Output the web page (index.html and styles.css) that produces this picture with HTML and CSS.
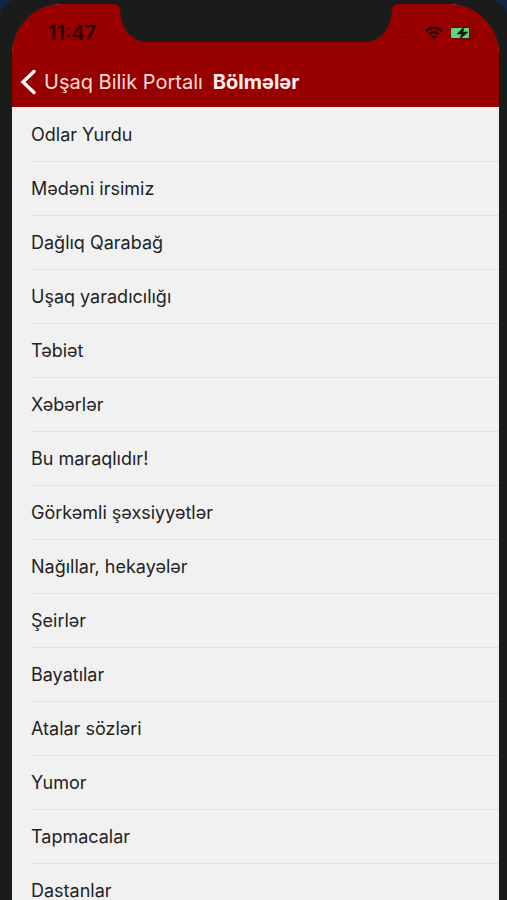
FILE: index.html
```html
<!DOCTYPE html>
<html lang="az">
<head>
<meta charset="utf-8">
<meta name="viewport" content="width=device-width, initial-scale=1">
<title>Bölmələr</title>
<link rel="stylesheet" href="styles.css">
</head>
<body>
<div class="phone">
  <div class="screen">
    <header class="header">
      <svg class="notch" viewBox="0 0 284 42" aria-hidden="true">
        <path d="M0 0V4C3 4 5 5 6 9C7 29 16 42 36 42H248C268 42 277 29 278 9C279 5 281 4 284 4V0Z" fill="#1a1c1b"/>
      </svg>
      <div class="status">
        <time class="clock">11:47</time>
        <div class="indicators">
          <svg class="signal" viewBox="0 0 22 4" aria-hidden="true">
            <path d="M1 2H5M7 2H11M13 2H17M18 2H21" stroke="#7c0303" stroke-width="2"/>
          </svg>
          <svg class="wifi" viewBox="0 0 18 14" aria-hidden="true">
            <g fill="none" stroke="#250404" stroke-width="2.3">
              <path d="M1 5.2C5.500 .6 12.500 .6 17 5.200"/>
              <path d="M4 8.500C7 5.700 11 5.700 14 8.500"/>
            </g>
            <path d="M6 10.500Q9 8.300 12 10.500L9 13.500Z" fill="#250404"/>
          </svg>
          <svg class="battery" viewBox="0 0 28 14" aria-hidden="true">
            <rect x="1" y="1" width="24" height="12" rx="3" fill="none" stroke="#6a0505"/>
            <path d="M26.500 5Q28 7 26.500 9Z" fill="#6a0505"/>
            <rect x="2" y="2" width="18" height="10" rx="1" fill="#5fd47a"/>
            <path d="M15 1L8 8H12.500L11 13L19 6H14Z" fill="#141c10" stroke="#141c10" stroke-width=".6"/>
          </svg>
        </div>
      </div>
      <nav class="navbar">
        <a class="back" href="#">
          <svg class="chevron" viewBox="0 0 16 26" aria-hidden="true">
            <path d="M14 2.500L3 13L14 23.500" fill="none" stroke="#fff" stroke-width="3.400" stroke-linecap="round"/>
          </svg>
          <span>Uşaq Bilik Portalı</span>
        </a>
        <h1 class="title">Bölmələr</h1>
      </nav>
    </header>
    <main>
      <ul class="list">
        <li><a href="#">Odlar Yurdu</a></li>
        <li><a href="#">Mədəni irsimiz</a></li>
        <li><a href="#">Dağlıq Qarabağ</a></li>
        <li><a href="#">Uşaq yaradıcılığı</a></li>
        <li><a href="#">Təbiət</a></li>
        <li><a href="#">Xəbərlər</a></li>
        <li><a href="#">Bu maraqlıdır!</a></li>
        <li><a href="#">Görkəmli şəxsiyyətlər</a></li>
        <li><a href="#">Nağıllar, hekayələr</a></li>
        <li><a href="#">Şeirlər</a></li>
        <li><a href="#">Bayatılar</a></li>
        <li><a href="#">Atalar sözləri</a></li>
        <li><a href="#">Yumor</a></li>
        <li><a href="#">Tapmacalar</a></li>
        <li><a href="#">Dastanlar</a></li>
      </ul>
    </main>
  </div>
</div>
</body>
</html>
```
FILE: styles.css
```css
* {
  box-sizing: border-box;
}

body {
  margin: 0;
  background: #10264a;
  font-family: Inter, "Liberation Sans", sans-serif;
  font-size: 18px;
  line-height: 24px;
}

a {
  color: inherit;
  text-decoration: none;
}

.phone {
  height: 100vh;
  padding: 4px 8px 0 12px;
  overflow: hidden;
  background: #1a1c1b;
  border-radius: 16px 16px 0 0;
}

.screen {
  min-height: 100%;
  background: #f1f1f1;
  border-radius: 52px 52px 0 0;
}

.header {
  padding: 17px 0 12px;
  background: #980000;
  border-radius: 50px 50px 0 0;
}

.notch {
  position: absolute;
  top: 0;
  left: calc(50% + 2px);
  width: 284px;
  height: 42px;
  margin-left: -142px;
}

.status {
  display: flex;
  align-items: center;
  justify-content: space-between;
  padding: 0 22px 0 36px;
}

.clock {
  color: #2a0303;
  font-size: 20px;
  font-weight: 600;
}

.indicators {
  display: flex;
  align-items: center;
  gap: 6px;
}

.signal {
  width: 22px;
  height: 4px;
  margin-top: 8px;
}

.wifi {
  width: 18px;
  height: 14px;
}

.battery {
  width: 28px;
  height: 14px;
}

.navbar {
  display: flex;
  align-items: center;
  gap: 10px;
  padding: 24px 8px 0;
  color: #fff;
  font-size: 20px;
  line-height: 26px;
  white-space: nowrap;
}

.back {
  display: flex;
  align-items: center;
  gap: 8px;
  color: #ffdcd6;
}

.chevron {
  width: 16px;
  height: 26px;
}

.title {
  margin: 0;
  color: #ffeeea;
  font-size: 20px;
  font-weight: 700;
}

.list {
  margin: 0;
  padding: 1px 0 0 19px;
  list-style: none;
  color: #232323;
}

.list li {
  border-bottom: 1px solid #e0e0e0;
}

.list a {
  display: block;
  padding: 15px 0 14px;
}
```
